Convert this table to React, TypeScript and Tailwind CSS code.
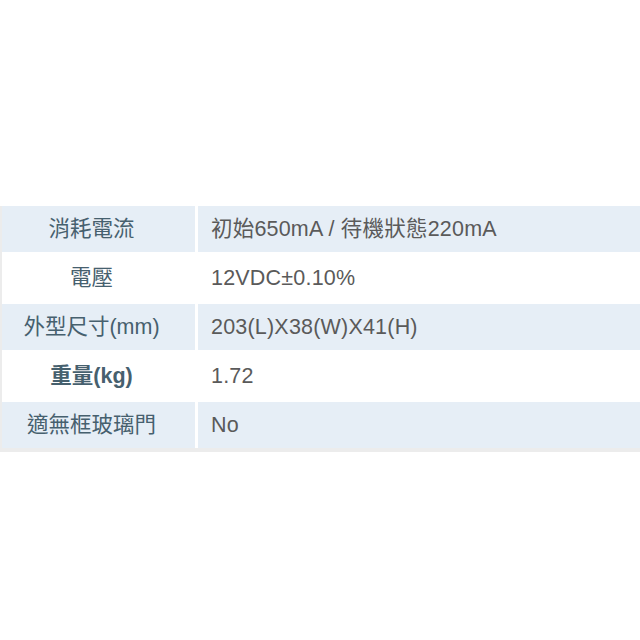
const rows: { label: string; value: string; bold?: boolean }[] = [
  { label: '消耗電流', value: '初始650mA / 待機狀態220mA' },
  { label: '電壓', value: '12VDC±0.10%' },
  { label: '外型尺寸(mm)', value: '203(L)X38(W)X41(H)' },
  { label: '重量(kg)', value: '1.72', bold: true },
  { label: '適無框玻璃門', value: 'No' },
];

export default function App() {
  return (
    <div
      className="min-h-[640px] w-[640px] bg-white pt-[206px]"
      style={{ fontFamily: '"Liberation Sans", "Noto Sans CJK TC", sans-serif' }}
    >
      <div className="grid grid-cols-[193px_1fr] gap-[3px] border-b-4 border-l-2 border-[#ececec] text-[21.5px]">
        {rows.map((row, i) => {
          const bg = i % 2 === 0 ? 'bg-[#e6eef6]' : 'bg-white';
          return (
            <div key={row.label} className="contents">
              <div
                className={`flex h-[46px] items-center justify-center pr-[14px] text-[#46606e] ${bg} ${
                  row.bold ? 'font-semibold' : ''
                }`}
              >
                {row.label}
              </div>
              <div className={`flex h-[46px] items-center pl-[13px] tracking-[0.2px] text-[#5a5a5a] ${bg}`}>
                {row.value}
              </div>
            </div>
          );
        })}
      </div>
    </div>
  );
}
